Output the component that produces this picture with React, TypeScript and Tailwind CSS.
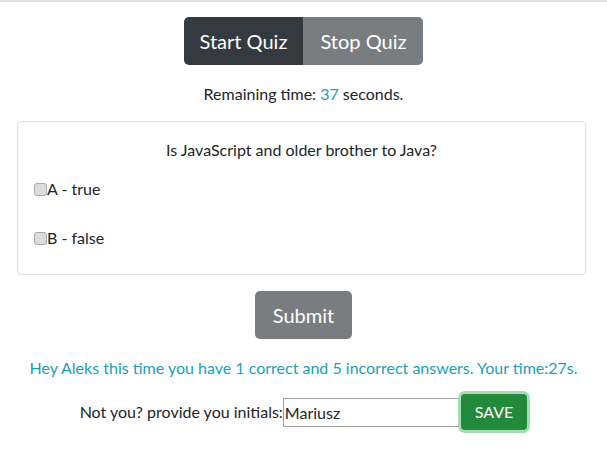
export default function App() {
  return (
    <div className="min-h-[467px] w-[607px] border-t-2 border-[#dee2e6] bg-white font-['Lato','Liberation_Sans',sans-serif] text-[16px] leading-6 text-[#212529]">
      <div className="flex flex-col items-center pt-[15px]">
        <div className="flex">
          <button className="h-12 rounded-l-[5px] bg-[#343a40] px-4 text-[20px] text-white">Start Quiz</button>
          <button className="h-12 rounded-r-[5px] bg-[#7a7d80] px-[17px] text-[20px] text-white">Stop Quiz</button>
        </div>
        <p className="mt-[17px]">
          Remaining time: <span className="text-[#17a2b8]">37</span> seconds.
        </p>
      </div>

      <div className="ml-[17px] mr-[21px] mt-[15px] rounded-[4px] border border-[#dfe1e5] px-4 pb-[24px] pt-4">
        <p className="text-center">Is JavaScript and older brother to Java?</p>
        <label className="mt-[15px] flex items-center">
          <span className="h-[13px] w-[13px] rounded-[3px] border border-[#a9a9a9] bg-[#dcdcdc]" />
          <span>A - true</span>
        </label>
        <label className="mt-[25px] flex items-center">
          <span className="h-[13px] w-[13px] rounded-[3px] border border-[#a9a9a9] bg-[#dcdcdc]" />
          <span>B - false</span>
        </label>
      </div>

      <div className="mt-4 flex justify-center">
        <button className="h-12 rounded-[5px] bg-[#7a7d80] px-[18px] text-[20px] text-white">Submit</button>
      </div>

      <p className="mt-[17px] text-center text-[#17a2b8]">
        Hey Aleks this time you have 1 correct and 5 incorrect answers. Your time:27s.
      </p>

      <div className="mt-[14px] flex items-center justify-center">
        <span>Not you? provide you initials:</span>
        <input
          readOnly
          value="Mariusz"
          className="h-[29px] w-[177px] border border-[#a0a0a0] px-px text-[16px] text-[#212529] outline-none"
        />
        <button className="ml-[1px] h-[36px] rounded-[4px] bg-[#228a3b] px-[14px] text-[16px] text-white ring-[3px] ring-[#a8dbb4]">
          SAVE
        </button>
      </div>
    </div>
  );
}
